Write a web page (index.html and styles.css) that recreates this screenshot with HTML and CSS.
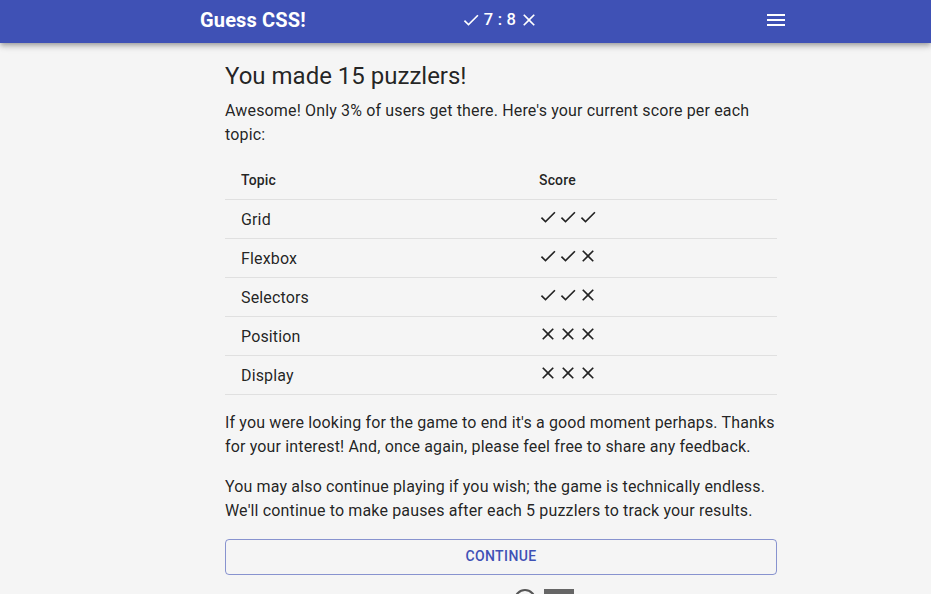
FILE: index.html
```html
<!DOCTYPE html>
<html lang="en">
<head>
<meta charset="utf-8">
<title>Guess CSS!</title>
<link rel="stylesheet" href="styles.css">
</head>
<body>
<header class="appbar">
  <div class="appbar-inner">
    <div class="brand">Guess CSS!</div>
    <div class="tally">
      <svg class="tally-icon" viewBox="0 0 24 24"><path d="M9 16.17L4.83 12l-1.42 1.41L9 19 21 7l-1.41-1.41z"/></svg>
      <span class="tally-text">7 : 8</span>
      <svg class="tally-icon" viewBox="0 0 24 24"><path d="M19 6.41L17.59 5 12 10.59 6.41 5 5 6.41 10.59 12 5 17.59 6.41 19 12 13.41 17.59 19 19 17.59 13.41 12z"/></svg>
    </div>
    <button class="menu-btn" aria-label="menu">
      <svg viewBox="0 0 24 24"><path d="M3 18h18v-2H3v2zm0-5h18v-2H3v2zm0-7v2h18V6H3z"/></svg>
    </button>
  </div>
</header>

<main class="page">
  <div class="content">
    <h1 class="title">You made 15 puzzlers!</h1>
    <p class="text intro">Awesome! Only 3% of users get there. Here's your current score per each topic:</p>

    <table class="score-table">
      <thead>
        <tr><th class="col-topic">Topic</th><th>Score</th></tr>
      </thead>
      <tbody>
        <tr><td>Grid</td><td><span class="marks"><i class="ok"></i><i class="ok"></i><i class="ok"></i></span></td></tr>
        <tr><td>Flexbox</td><td><span class="marks"><i class="ok"></i><i class="ok"></i><i class="no"></i></span></td></tr>
        <tr><td>Selectors</td><td><span class="marks"><i class="ok"></i><i class="ok"></i><i class="no"></i></span></td></tr>
        <tr><td>Position</td><td><span class="marks"><i class="no"></i><i class="no"></i><i class="no"></i></span></td></tr>
        <tr><td>Display</td><td><span class="marks"><i class="no"></i><i class="no"></i><i class="no"></i></span></td></tr>
      </tbody>
    </table>

    <p class="text">If you were looking for the game to end it's a good moment perhaps. Thanks for your interest! And, once again, please feel free to share any feedback.</p>
    <p class="text">You may also continue playing if you wish; the game is technically endless. We'll continue to make pauses after each 5 puzzlers to track your results.</p>

    <button class="continue">Continue</button>

    <div class="footer">
      <span class="gh"></span>
      <span class="badge"></span>
    </div>
  </div>
</main>
</body>
</html>
```

FILE: styles.css
```css
* { box-sizing: border-box; }

html, body {
  margin: 0;
  padding: 0;
  background: #f5f5f5;
  font-family: Roboto, "Liberation Sans", Arial, sans-serif;
  color: rgba(0, 0, 0, 0.87);
  overflow: hidden;
  height: 594px;
}

.appbar {
  background: #3f51b5;
  color: #fff;
  height: 43px;
  box-shadow: 0 2px 4px -1px rgba(0,0,0,0.2), 0 4px 5px 0 rgba(0,0,0,0.14), 0 1px 10px 0 rgba(0,0,0,0.12);
  position: relative;
  z-index: 2;
}

.appbar-inner {
  width: 600px;
  margin-left: 200px;
  height: 100%;
  display: flex;
  align-items: center;
  justify-content: space-between;
  padding-bottom: 4px;
}

.brand {
  font-size: 20px;
  font-weight: 700;
  letter-spacing: 0.15px;
  width: 140px;
}

.tally {
  display: flex;
  align-items: center;
  gap: 3px;
  font-size: 16.5px;
  font-weight: 500;
  letter-spacing: 0.2px;
  margin-left: 0;
}

.tally-icon {
  width: 20px;
  height: 20px;
  fill: #fff;
}

.menu-btn {
  width: 140px;
  height: 40px;
  border: 0;
  background: transparent;
  padding: 0 12px 0 0;
  display: flex;
  align-items: center;
  justify-content: flex-end;
}

.menu-btn svg {
  width: 24px;
  height: 24px;
  fill: #fff;
}

.page {
  width: 600px;
  margin-left: 201px;
}

.content {
  width: 552px;
  margin-left: 24px;
  padding-top: 17px;
}

.title {
  margin: 0 0 7px;
  font-size: 24px;
  font-weight: 400;
  line-height: 32px;
}

.text {
  margin: 0 0 16px;
  font-size: 16px;
  line-height: 24px;
  letter-spacing: 0.15px;
}

.text.intro { margin-bottom: 14px; }

.score-table {
  width: 100%;
  border-collapse: collapse;
  margin-bottom: 16px;
}

.score-table th {
  text-align: left;
  font-size: 14px;
  font-weight: 500;
  line-height: 22px;
  letter-spacing: 0.15px;
  height: 38px;
  padding: 0 16px;
  border-bottom: 1px solid #e0e0e0;
  vertical-align: middle;
}

.score-table th.col-topic { width: 298px; }

.score-table td {
  font-size: 16px;
  letter-spacing: 0.15px;
  height: 39px;
  padding: 0 16px;
  border-bottom: 1px solid #e0e0e0;
  vertical-align: middle;
}

.score-table td:first-child { padding-top: 1px; }

.marks {
  display: flex;
  margin-left: -1px;
  margin-top: -3px;
}

.marks i {
  width: 20px;
  height: 20px;
  display: block;
  background: #222;
}

.marks i.ok {
  -webkit-mask: url("data:image/svg+xml;utf8,<svg xmlns='http://www.w3.org/2000/svg' viewBox='0 0 24 24'><path d='M9 16.17L4.83 12l-1.42 1.41L9 19 21 7l-1.41-1.41z'/></svg>") center / 20px 20px no-repeat;
  mask: url("data:image/svg+xml;utf8,<svg xmlns='http://www.w3.org/2000/svg' viewBox='0 0 24 24'><path d='M9 16.17L4.83 12l-1.42 1.41L9 19 21 7l-1.41-1.41z'/></svg>") center / 20px 20px no-repeat;
}

.marks i.no {
  -webkit-mask: url("data:image/svg+xml;utf8,<svg xmlns='http://www.w3.org/2000/svg' viewBox='0 0 24 24'><path d='M19 6.41L17.59 5 12 10.59 6.41 5 5 6.41 10.59 12 5 17.59 6.41 19 12 13.41 17.59 19 19 17.59 13.41 12z'/></svg>") center / 20px 20px no-repeat;
  mask: url("data:image/svg+xml;utf8,<svg xmlns='http://www.w3.org/2000/svg' viewBox='0 0 24 24'><path d='M19 6.41L17.59 5 12 10.59 6.41 5 5 6.41 10.59 12 5 17.59 6.41 19 12 13.41 17.59 19 19 17.59 13.41 12z'/></svg>") center / 20px 20px no-repeat;
}

.continue {
  display: block;
  width: 100%;
  height: 36px;
  margin-top: 16px;
  border: 1px solid rgba(63, 81, 181, 0.6);
  border-radius: 4px;
  background: transparent;
  color: #3f51b5;
  font-family: Roboto, "Liberation Sans", Arial, sans-serif;
  font-size: 14px;
  font-weight: 500;
  letter-spacing: 0.4px;
  text-transform: uppercase;
  padding-bottom: 3px;
}

.footer {
  display: flex;
  justify-content: center;
  gap: 8px;
  margin-top: 14px;
  padding-left: 86px;
}

.gh {
  width: 22px;
  height: 22px;
  border-radius: 50%;
  border: 2px solid #555;
}

.badge {
  width: 30px;
  height: 20px;
  background: #666;
}
```
